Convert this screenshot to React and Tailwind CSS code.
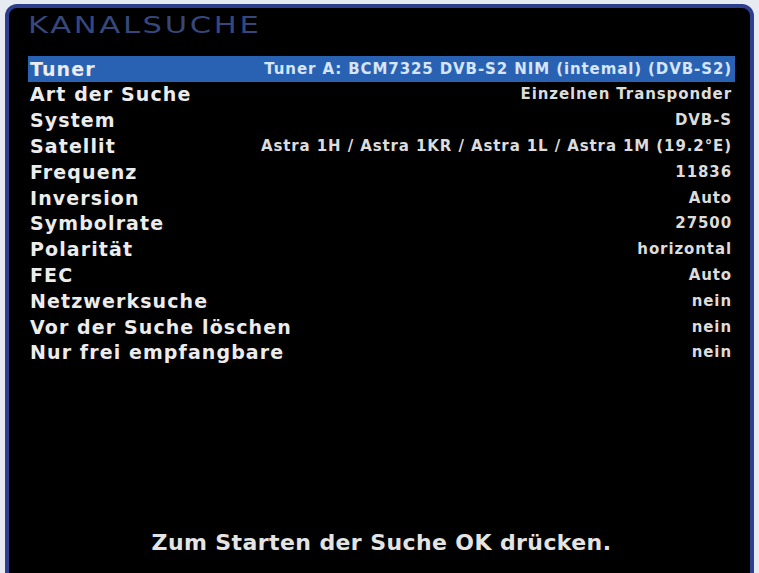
import React from 'react';

const rows = [
    ['Tuner', 'Tuner A: BCM7325 DVB-S2 NIM (intemal) (DVB-S2)'],
    ['Art der Suche', 'Einzelnen Transponder'],
    ['System', 'DVB-S'],
    ['Satellit', 'Astra 1H / Astra 1KR / Astra 1L / Astra 1M (19.2°E)'],
    ['Frequenz', '11836'],
    ['Inversion', 'Auto'],
    ['Symbolrate', '27500'],
    ['Polarität', 'horizontal'],
    ['FEC', 'Auto'],
    ['Netzwerksuche', 'nein'],
    ['Vor der Suche löschen', 'nein'],
    ['Nur frei empfangbare', 'nein'],
];

const App = () => {
    return (
        <div className="w-[759px] h-[573px] overflow-hidden bg-[#e6eaf1] pl-[5px] pt-[4px] font-['DejaVu_Sans',sans-serif]">
            <div className="w-[749px] h-[580px] rounded-t-[12px] border-[4px] border-[#2d3e8e] bg-black flex flex-col pl-[19px] pr-[15px]">
                {/* title */}
                <div className="h-[48px] pt-[3px] text-[23px] leading-[28px] text-[#36477c] font-normal">
                    <span className="inline-block origin-left scale-x-[1.33] tracking-[2px]">KANALSUCHE</span>
                </div>

                {/* settings list */}
                <div className="flex flex-col">
                    {rows.map(([label, value], i) => (
                        <div
                            key={label}
                            className={`h-[25.8px] flex items-center justify-between pl-[2px] pr-[3px] ${i === 0 ? 'bg-[#2a62b3]' : ''}`}
                        >
                            <span className="text-[19px] font-bold tracking-[1.1px] text-[#ececec]">{label}</span>
                            <span className={`text-[15px] font-bold tracking-[0.9px] ${i === 0 ? 'text-[#d6e6fa]' : 'text-[#dcdcdc]'}`}>{value}</span>
                        </div>
                    ))}
                </div>

                {/* hint */}
                <div className="mt-auto mb-[21px] text-center text-[22px] font-bold tracking-[0.4px] text-[#e4e4e4]">
                    Zum Starten der Suche OK drücken.
                </div>
            </div>
        </div>
    );
};

export default App;
